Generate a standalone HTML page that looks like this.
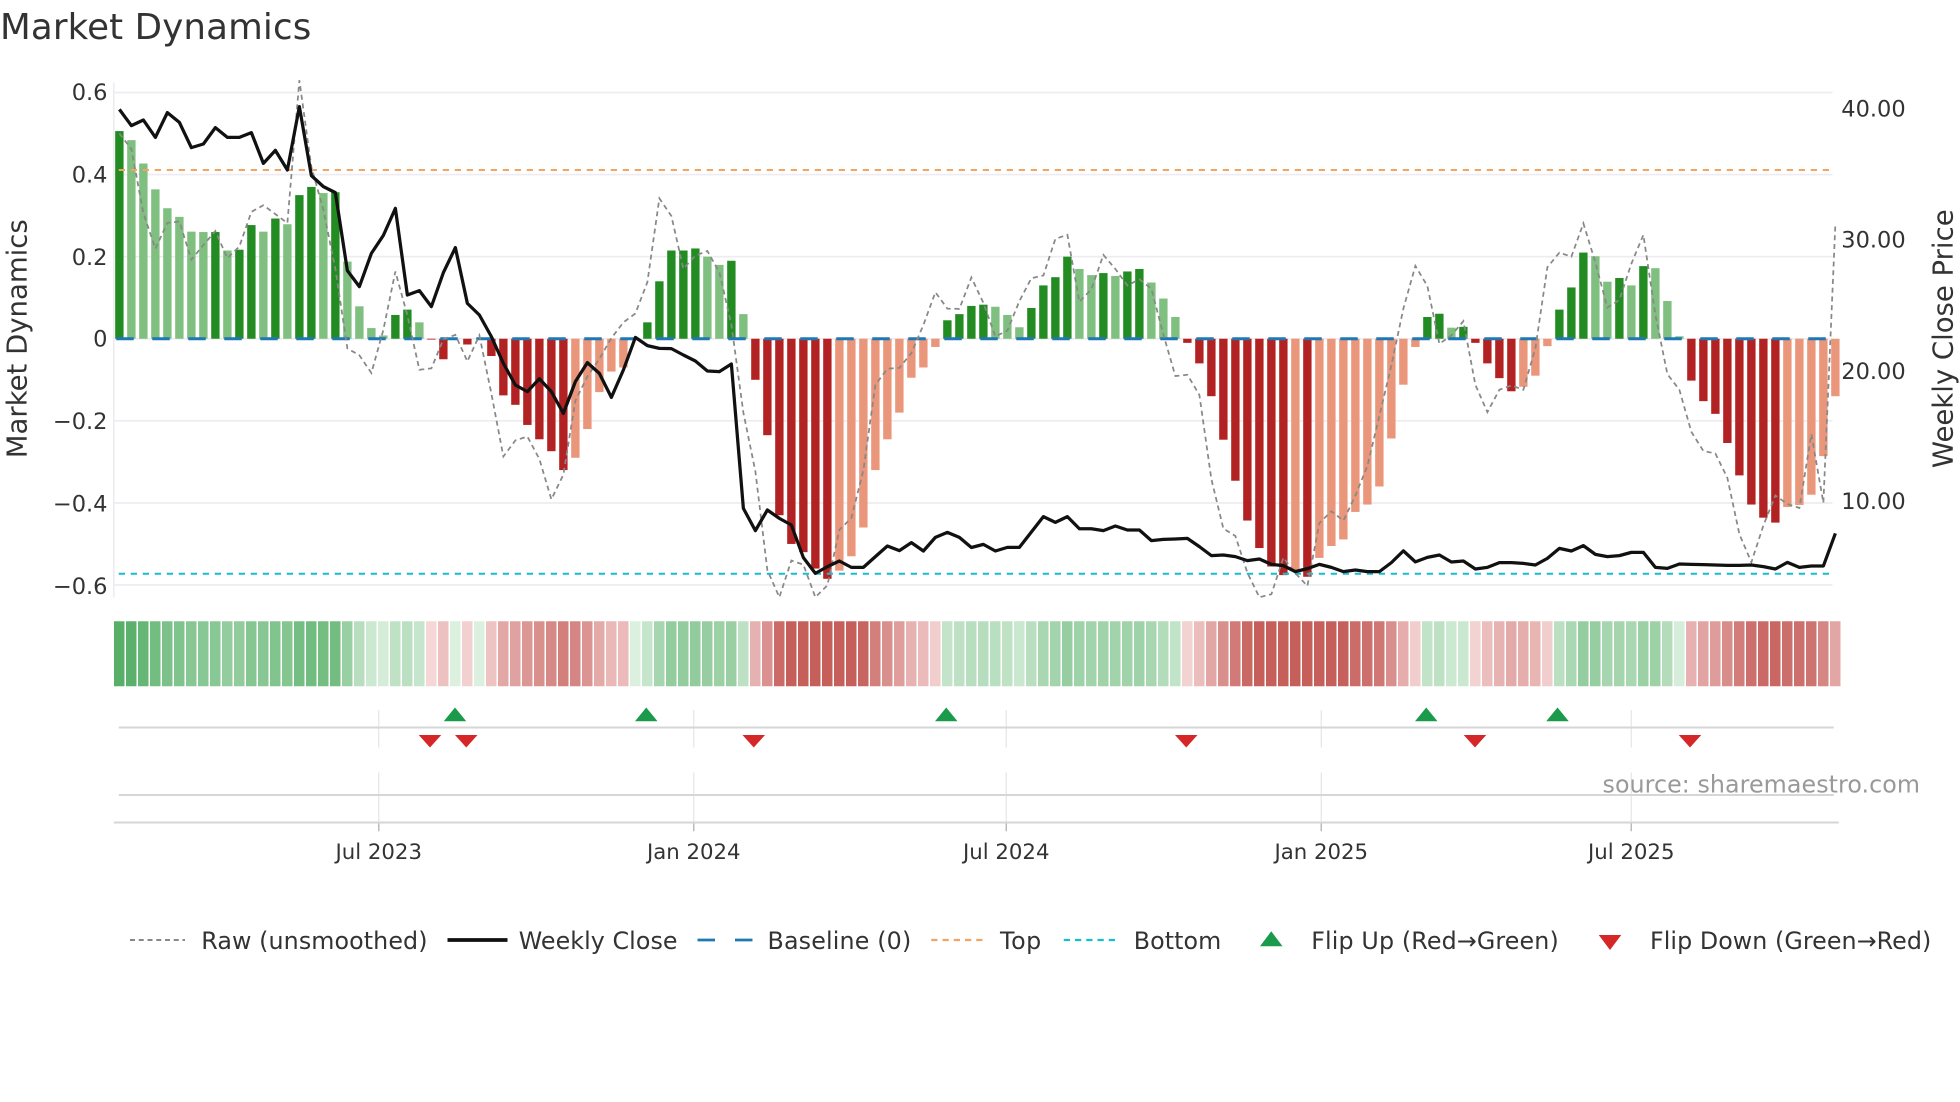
<!DOCTYPE html>
<html><head><meta charset="utf-8"><style>
html,body{margin:0;padding:0;background:#fff;width:1960px;height:1102px;overflow:hidden}
svg{display:block;font-family:"DejaVu Sans","Liberation Sans",sans-serif}
</style></head><body>
<svg id="s" width="1960" height="1102" viewBox="0 0 1568 881.6" xmlns="http://www.w3.org/2000/svg">
<text x="0" y="31" font-size="28.5" fill="#333" textLength="249">Market Dynamics</text>
<g id="grid"></g>
<g id="bars"></g>
<g id="lines"></g>
<g id="heat"></g>
<g id="lower"></g>
<g font-size="18" fill="#333">
<text x="86" y="80" text-anchor="end">0.6</text>
<text x="86" y="146" text-anchor="end">0.4</text>
<text x="86" y="212" text-anchor="end">0.2</text>
<text x="86" y="277" text-anchor="end">0</text>
<text x="86" y="343" text-anchor="end">−0.2</text>
<text x="86" y="409" text-anchor="end">−0.4</text>
<text x="86" y="475" text-anchor="end">−0.6</text>
<text x="1473" y="93">40.00</text>
<text x="1473" y="198">30.00</text>
<text x="1473" y="303">20.00</text>
<text x="1473" y="407">10.00</text>
<text transform="translate(21,271) rotate(-90)" text-anchor="middle" font-size="22">Market Dynamics</text>
<text transform="translate(1562,271) rotate(-90)" text-anchor="middle" font-size="22">Weekly Close Price</text>
<text x="303" y="687" text-anchor="middle" font-size="17">Jul 2023</text>
<text x="555" y="687" text-anchor="middle" font-size="17">Jan 2024</text>
<text x="805" y="687" text-anchor="middle" font-size="17">Jul 2024</text>
<text x="1057" y="687" text-anchor="middle" font-size="17">Jan 2025</text>
<text x="1305" y="687" text-anchor="middle" font-size="17">Jul 2025</text>
<text x="1282" y="634" fill="#999" font-size="19" textLength="254">source: sharemaestro.com</text>
</g>
<g font-size="19" fill="#333">
<line x1="104" y1="752" x2="148" y2="752" stroke="#888" stroke-width="1.6" stroke-dasharray="4,3"/>
<text x="161" y="759" textLength="181">Raw (unsmoothed)</text>
<line x1="358" y1="752" x2="406" y2="752" stroke="#111" stroke-width="3"/>
<text x="415" y="759" textLength="127">Weekly Close</text>
<line x1="558" y1="752" x2="602" y2="752" stroke="#1f77b4" stroke-width="2.2" stroke-dasharray="14,16"/>
<text x="614" y="759" textLength="115">Baseline (0)</text>
<line x1="745" y1="752" x2="789" y2="752" stroke="#f4a460" stroke-width="1.8" stroke-dasharray="5,4"/>
<text x="800" y="759" textLength="33">Top</text>
<line x1="851" y1="752" x2="895" y2="752" stroke="#17becf" stroke-width="1.8" stroke-dasharray="5,4"/>
<text x="907" y="759" textLength="70">Bottom</text>
<polygon points="1008,757 1026,757 1017,745" fill="#1a9a4a"/>
<text x="1049" y="759" textLength="198">Flip Up (Red→Green)</text>
<polygon points="1279,748 1297,748 1288,760" fill="#d62728"/>
<text x="1320" y="759" textLength="225">Flip Down (Green→Red)</text>
</g>
</svg>
<script>
var NS="http://www.w3.org/2000/svg";
function el(p,t,a){var e=document.createElementNS(NS,t);for(var k in a)e.setAttribute(k,a[k]);document.getElementById(p).appendChild(e);return e;}
var V=[.506,.484,.427,.364,.318,.297,.261,.26,.26,.215,.217,.277,.261,.293,.279,.35,.37,.355,.357,.188,.079,.026,.008,.058,.071,.04,-.002,-.05,0,-.014,0,-.042,-.138,-.161,-.21,-.245,-.274,-.32,-.29,-.22,-.13,-.08,-.07,0,.04,.14,.215,.215,.22,.2,.18,.19,.06,-.1,-.235,-.43,-.5,-.52,-.56,-.585,-.565,-.53,-.46,-.32,-.245,-.18,-.095,-.07,-.02,.045,.06,.08,.083,.078,.058,.028,.075,.13,.15,.2,.17,.155,.16,.153,.164,.17,.137,.098,.053,-.01,-.06,-.14,-.246,-.346,-.443,-.51,-.555,-.576,-.563,-.58,-.534,-.505,-.489,-.422,-.404,-.36,-.243,-.112,-.02,.053,.061,.027,.029,-.01,-.06,-.096,-.128,-.117,-.09,-.018,.071,.125,.21,.201,.139,.148,.13,.177,.172,.092,.006,-.102,-.152,-.183,-.254,-.333,-.404,-.436,-.448,-.41,-.405,-.38,-.286,-.14];
var C="DLLLLLLLDLDDLDLDDLDLLLLDDL"+"RRRRRRRRRRRR"+"SSSSSS"+"DDDDDLLDL"+"RRRRRRR"+"SSSSSSSSS"+"DDDD"+"LLL"+"DDDD"+"LLDLDDLLL"+"RRRRRRRRRSR"+"SSSSSSSSS"+"DDLD"+"RRRR"+"SSS"+"DDDLLDLDLLL"+"RRRRRRRR"+"SSSSS";
var P=[87.5,100.5,96,109.9,90.1,97.9,118.1,115.2,102.1,109.9,109.9,106.1,130.7,120.3,136,85.3,140.5,149.3,154.1,216.5,229.3,202.7,188.3,166.7,236,232.5,245.3,218.1,198.1,242.7,252,269.3,290.7,308,313.3,303,313.3,330.7,305.3,290.1,298.7,317.9,296,269.9,276.5,278.7,278.9,284,288.8,296.8,297.3,291.2,406.7,424.5,408,414.7,420,446.1,458.7,453.3,448.8,453.9,453.9,445.3,436.8,440.5,434.1,440.8,429.9,425.9,429.9,438,435.5,440.8,437.9,437.9,425.6,413.3,417.9,413.3,423,423,424.5,420.8,424,424,432.5,431.5,431.2,430.7,437.3,444.5,444,445.3,448.5,447.2,451.5,452.5,457.3,454.9,451.5,453.9,457.3,456,457.3,457.3,450.1,440.7,449.5,445.9,444,449.6,448.8,455.2,453.9,450.1,450.1,450.7,452,446.7,438.7,440.8,436.5,443.5,445.3,444.5,441.9,441.9,453.9,454.7,451.2,451.5,451.7,452,452.3,452.3,452,453.3,455.2,449.9,453.9,452.8,452.8,426.7];
var X0=95.5,ST=9.6,Y0=271,K=328.3;
function X(i){return X0+ST*i}
function Y(v){return Y0-K*v}
[.6,.4,.2,0,-.2,-.4,-.6].forEach(function(v){el("grid","line",{x1:91,x2:1466,y1:Y(v),y2:Y(v),stroke:"#ececf1","stroke-width":1.3});});
el("grid","line",{x1:91,x2:91,y1:66,y2:478,stroke:"#ececf1","stroke-width":1.3});
var col={D:"#228b22",L:"#7fbf7f",R:"#b22222",S:"#e9967a"};
V.forEach(function(v,i){var y=Math.min(Y(v),Y0),h=Math.abs(K*v);if(h<0.3)return;el("bars","rect",{x:X(i)-3.35,y:y,width:6.7,height:h,fill:col[C[i]]||"#e9967a"});});
el("lines","line",{x1:93,x2:1466,y1:271,y2:271,stroke:"#1f77b4","stroke-width":2.4,"stroke-dasharray":"14,14.8"});
el("lines","line",{x1:95,x2:1466,y1:136,y2:136,stroke:"#f4a460","stroke-width":1.6,"stroke-dasharray":"5,4.6"});
el("lines","line",{x1:95,x2:1466,y1:459,y2:459,stroke:"#17becf","stroke-width":1.6,"stroke-dasharray":"5,4.6"});
var R=[];for(var i=0;i<V.length;i++){var a=V[Math.max(0,i-1)],b=V[Math.min(V.length-1,i+1)];var r=V[i]+0.9*(b-a)+0.05*Math.sin(i*1.7);r=Math.max(-0.63,Math.min(0.6,r));R.push(r);}
R[15]=.63;R[0]=.5;R[143]=.28;R[142]=-.4;
var d="";R.forEach(function(r,i){d+=(i?"L":"M")+X(i).toFixed(1)+","+Y(r).toFixed(1)});
el("lines","path",{d:d,fill:"none",stroke:"#888","stroke-width":1.4,"stroke-dasharray":"4,3"});
d="";P.forEach(function(p,i){d+=(i?"L":"M")+X(i).toFixed(1)+","+p});
el("lines","path",{d:d,fill:"none",stroke:"#111","stroke-width":2.6,"stroke-linejoin":"round"});
function mix(a,b,t){return "rgb("+a.map(function(x,k){return Math.round(x+(b[k]-x)*t)}).join(",")+")"}
V.forEach(function(v,i){var t=Math.min(1,Math.abs(v)/0.5);t=Math.pow(t,0.7);var c=v>=0?mix([220,240,224],[88,176,104],t):mix([246,218,218],[198,94,90],t);
el("heat","rect",{x:X(i)-4.3,y:497,width:8.4,height:52,fill:c});});
[303,555,805,1057,1305].forEach(function(x){el("lower","line",{x1:x,x2:x,y1:568,y2:598,stroke:"#e6e6ea","stroke-width":1});el("lower","line",{x1:x,x2:x,y1:618,y2:658,stroke:"#e6e6ea","stroke-width":1});el("lower","line",{x1:x,x2:x,y1:658,y2:665,stroke:"#bbb","stroke-width":1.2});});
el("lower","line",{x1:95,x2:1467,y1:582,y2:582,stroke:"#d6d6d6","stroke-width":1.6});
el("lower","line",{x1:95,x2:1467,y1:636,y2:636,stroke:"#d6d6d6","stroke-width":1.6});
el("lower","line",{x1:91,x2:1471,y1:658,y2:658,stroke:"#d6d6d6","stroke-width":1.6});
[364,517,757,1141,1246].forEach(function(x){el("lower","polygon",{points:(x-9)+",577 "+(x+9)+",577 "+x+",566",fill:"#1a9a4a"});});
[344,373,603,949,1180,1352].forEach(function(x){el("lower","polygon",{points:(x-9)+",588 "+(x+9)+",588 "+x+",598",fill:"#d62728"});});
</script>
</body></html>
